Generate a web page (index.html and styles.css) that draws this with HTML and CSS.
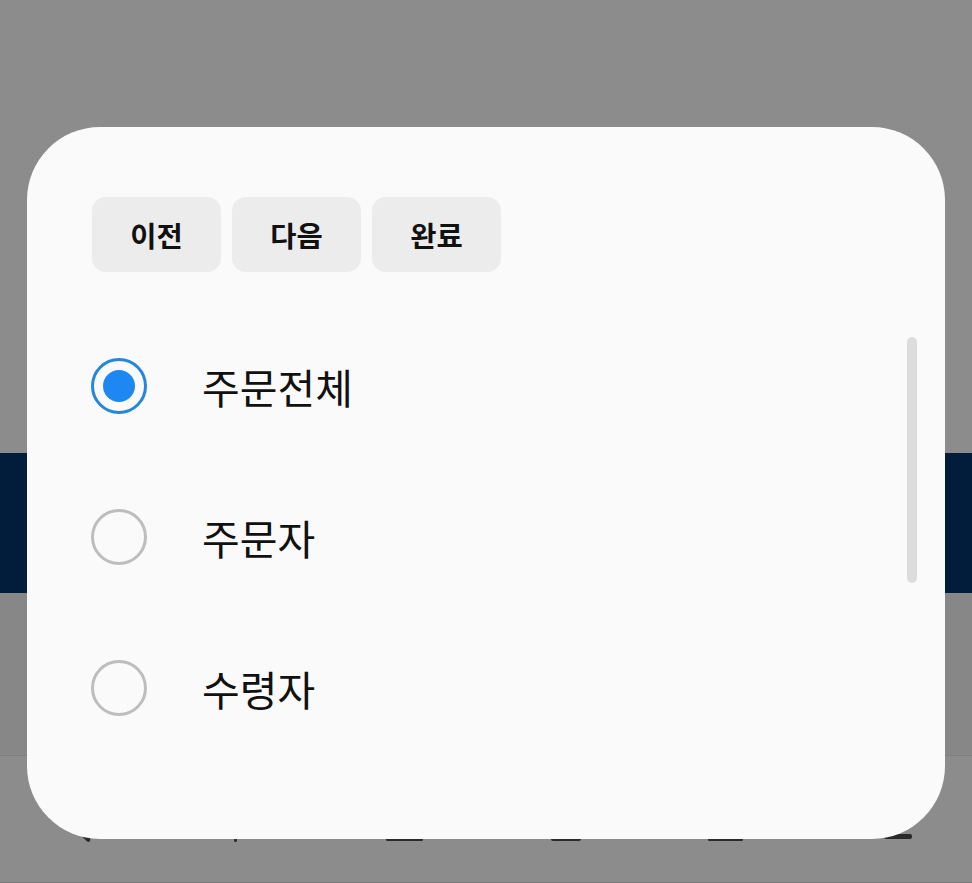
FILE: index.html
```html
<!DOCTYPE html>
<html lang="ko">
<head>
<meta charset="utf-8">
<title>선택</title>
<link rel="stylesheet" href="styles.css">
</head>
<body>
<div class="backdrop">
  <div class="band band-top"></div>
  <div class="band band-navy"></div>
  <div class="band band-mid"></div>
  <div class="band band-bottom">
    <span class="peek peek-1"></span>
    <span class="peek peek-2"></span>
    <span class="peek peek-3"></span>
    <span class="peek peek-4"></span>
    <span class="peek peek-5"></span>
    <span class="peek peek-6"></span>
  </div>
</div>

<div class="dialog">
  <div class="toolbar">
    <button class="tool-btn">이전</button>
    <button class="tool-btn">다음</button>
    <button class="tool-btn">완료</button>
  </div>
  <div class="options">
    <div class="option">
      <span class="radio radio-on"><span class="dot"></span></span>
      <span class="label">주문전체</span>
    </div>
    <div class="option">
      <span class="radio"></span>
      <span class="label">주문자</span>
    </div>
    <div class="option">
      <span class="radio"></span>
      <span class="label">수령자</span>
    </div>
  </div>
  <div class="scrollbar"></div>
</div>
</body>
</html>
```
FILE: styles.css
```css
html, body {
  margin: 0;
  padding: 0;
}
body {
  width: 972px;
  height: 883px;
  overflow: hidden;
  background: #8c8c8c;
  font-family: "Noto Sans CJK KR", "Noto Sans", sans-serif;
  position: relative;
}
.backdrop {
  display: flex;
  flex-direction: column;
  height: 883px;
}
.band-top {
  height: 453px;
  background: #8c8c8c;
}
.band-navy {
  height: 140px;
  background: #021c3b;
}
.band-mid {
  height: 162px;
  background: #878787;
  border-bottom: 1px solid #7e7e7e;
}
.band-bottom {
  flex: 1;
  background: #8c8c8c;
  border-bottom: 1px solid #7a7a7a;
  position: relative;
}
.peek {
  position: absolute;
  background: #2a2a2a;
  border-radius: 2px;
}
.peek-1 { left: 82px; top: 80px; width: 9px; height: 4px; transform: rotate(45deg); }
.peek-2 { left: 234px; top: 82px; width: 3px; height: 4px; }
.peek-3 { left: 386px; top: 82px; width: 37px; height: 3px; }
.peek-4 { left: 551px; top: 80px; width: 30px; height: 5px; }
.peek-5 { left: 708px; top: 82px; width: 35px; height: 3px; }
.peek-6 { left: 884px; top: 78px; width: 28px; height: 5px; }

.dialog {
  position: absolute;
  left: 27px;
  top: 127px;
  width: 918px;
  height: 712px;
  background: #fafafa;
  border-radius: 73px;
  box-sizing: border-box;
  padding: 70px 0 0 65px;
  display: flex;
  flex-direction: column;
}
.toolbar {
  display: flex;
  gap: 11px;
}
.tool-btn {
  width: 129px;
  height: 75px;
  border: none;
  border-radius: 14px;
  background: #ececec;
  font-family: "Noto Sans CJK KR", "Noto Sans", sans-serif;
  font-weight: 700;
  font-size: 28.5px;
  color: #111;
  padding: 0;
}
.options {
  margin-top: 38px;
  display: flex;
  flex-direction: column;
}
.option {
  height: 151px;
  display: flex;
  align-items: center;
  gap: 55px;
  margin-left: -1px;
}
.radio {
  width: 56px;
  height: 56px;
  box-sizing: border-box;
  border-radius: 50%;
  border: 3px solid #bdbdbd;
  display: flex;
  align-items: center;
  justify-content: center;
  flex: none;
}
.radio-on {
  border-color: #2685dc;
}
.dot {
  width: 32px;
  height: 32px;
  border-radius: 50%;
  background: #1e87f2;
}
.label {
  font-size: 41px;
  color: #111;
  line-height: 1;
  margin-top: 2px;
}
.scrollbar {
  position: absolute;
  right: 28px;
  top: 210px;
  width: 10px;
  height: 246px;
  border-radius: 5px;
  background: #dcdcdc;
}
```
